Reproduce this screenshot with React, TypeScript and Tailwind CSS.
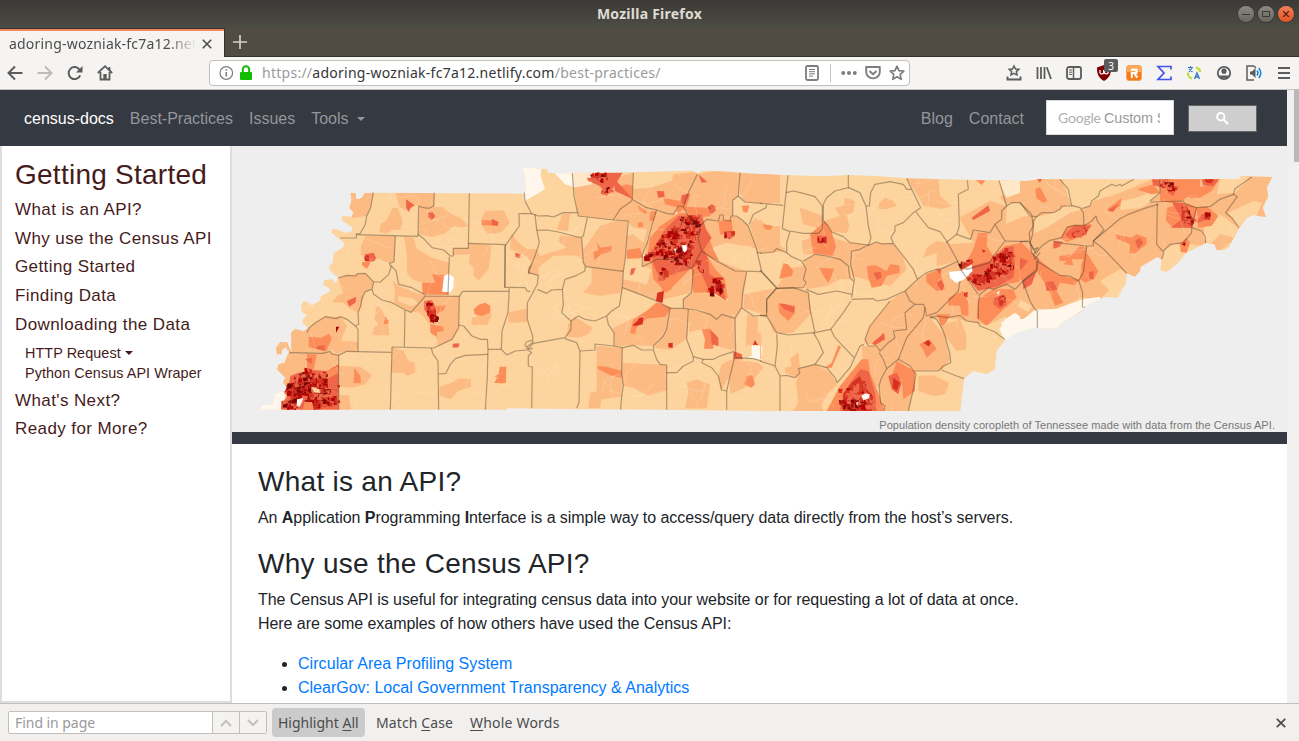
import React from "react";

type Patch = [string, string];

const C1 = "#fff7ec";
const C2 = "#fee8c8";
const C3 = "#fdd49e";
const C4 = "#fdbb84";
const C5 = "#fc8d59";
const C6 = "#ef6548";
const C7 = "#d7301f";
const C8 = "#b30000";
const C9 = "#7f0000";

const OUTLINE =
  "356,141 372,142 372,156 380,160 392,153 397,142 424,140 875,143 882,125 878,90 870,64 928,68 947,70 947,81 1020,81 1200,79 1380,74 1396,82 1410,75 1470,75 1524,80 1584,84 1680,88 1774,91 1849,87 1934,90 2024,97 2204,101 2384,105 2424,99 2704,100 3022,99 3026,91 3121,93 3104,125 3109,150 3092,185 3102,213 3079,210 3064,206 3044,215 3019,250 2989,305 2975,313 2954,312 2947,295 2924,290 2904,300 2864,320 2834,355 2804,378 2785,372 2789,340 2776,333 2726,362 2724,375 2709,392 2684,382 2682,410 2664,440 2657,455 2620,453 2604,460 2560,482 2540,503 2514,515 2490,530 2474,548 2404,545 2364,557 2319,583 2294,615 2289,670 2264,685 2224,675 2196,698 2185,795 1584,795 1300,791 1000,789 825,787 825,791 85,791 88,776 120,778 130,742 160,735 165,722 152,710 160,695 135,670 140,655 158,650 165,630 172,618 160,604 150,612 148,625 135,625 132,605 145,588 165,588 172,605 180,619 178,600 176,560 190,549 215,556 228,545 212,530 212,520 225,508 210,498 207,478 215,466 228,468 240,478 262,466 268,450 295,435 290,425 274,418 276,402 300,400 312,412 318,395 295,375 290,362 302,350 305,322 335,302 335,290 318,276 300,262 298,250 312,249 340,260 358,258 362,245 328,222 330,210 358,212 365,200 352,186 358,165";

const WEST: Patch[] = [
  [C4, "350,140 424,140 416,185 404,210 360,216 350,180"],
  [C4, "490,140 607,140 607,182 570,187 560,178 540,180 525,195 503,184"],
  [C4, "482,186 498,186 512,225 508,250 480,252 465,263 442,258 445,235 462,225"],
  [C6, "522,160 548,178 536,186 530,198 523,185"],
  [C4, "562,183 630,183 658,205 685,215 709,240 690,245 665,240 640,262 600,272 560,265"],
  [C6, "588,200 602,199 610,211 600,222 589,214"],
  [C4, "760,195 815,193 833,230 812,255 790,263 765,262 748,235 750,215"],
  [C5, "748,222 780,222 780,238 750,238"],
  [C6, "780,218 800,228 797,240 778,238"],
  [C4, "400,270 490,270 486,348 465,350 440,337 420,348 400,340 386,325 387,298"],
  [C6, "398,325 425,320 432,335 428,346 402,347"],
  [C7, "397,330 410,328 412,345 398,345"],
  [C5, "390,348 415,347 412,358 404,368 390,358"],
  [C4, "516,270 545,275 555,310 600,335 652,350 648,447 580,447 570,410 540,400 525,380 525,330"],
  [C5, "600,385 640,388 648,447 572,445 570,410 610,410"],
  [C4, "664,307 709,307 709,292 778,297 770,370 740,403 725,390 725,365 710,350 715,325 664,327"],
  [C4, "318,396 345,388 400,382 425,408 420,430 400,437 388,480 378,500 350,485 335,470 300,468 315,450 335,440 325,420"],
  [C6, "345,465 373,452 370,470 352,482"],
  [C4, "482,403 500,420 550,440 580,449 537,499 485,470 490,440"],
  [C3, "497,450 545,458 560,475 535,480 500,466"],
  [C4, "432,483 445,482 462,520 470,540 472,568 420,568 425,545 440,535 428,520"],
  [C5, "460,512 470,524 468,534 454,534"],
  [C4, "580,449 682,451 680,545 660,580 618,600 612,570 600,545 580,520 565,500 540,497"],
  [C6, "577,465 600,463 612,485 613,505 590,510 577,490"],
  [C5, "613,480 642,478 635,492 615,505"],
  [C5, "595,535 635,542 634,556 615,558 614,573 595,560"],
  [C7, "584,475 590,463 600,485 612,492 612,520 598,525 585,505"],
  [C9, "600,512 618,510 618,528 604,528"],
  [C4, "733,480 775,485 778,510 765,537 718,537 720,515 735,510"],
  [C5, "725,490 740,476 760,470 775,480 773,500 750,510 728,505"],
  [C4, "230,548 250,530 280,512 325,512 345,540 330,575 325,600 300,612 265,620 178,620 178,550 190,545"],
  [C4, "330,585 378,588 378,617 345,617 320,628 300,615"],
  [C5, "230,572 268,575 290,563 300,575 290,600 280,622 230,618"],
  [C6, "258,600 278,598 278,622 236,622"],
  [C8, "312,542 322,542 312,560"],
  [C4, "130,580 320,625 320,791 145,791 165,735 150,700 130,670"],
  [C1, "80,735 165,730 150,795 80,795"],
  [C5, "225,625 255,625 245,670 225,675"],
  [C6, "220,640 240,635 238,655"],
  [C6, "175,690 200,680 240,672 285,675 320,655 320,791 147,791 148,765 162,762"],
  [C5, "285,675 320,660 320,680 285,700"],
  [C4, "322,660 385,662 420,688 400,715 360,725 322,722"],
  [C5, "367,665 385,690 387,710 365,712"],
  [C4, "320,747 350,748 358,791 320,791"],
  [C4, "480,603 515,615 530,645 548,650 550,680 525,690 515,680 478,680"],
  [C6, "662,593 682,592 680,604 662,605"],
  [C4, "622,722 660,710 680,697 716,698 718,722 680,735 655,760 622,748"],
  [C5, "803,662 823,662 822,685 818,712 787,711 795,695 788,690 800,685"],
  [C4, "833,498 885,490 885,528 832,530"],
];

const MID: Patch[] = [
  [C1, "60,60 124,68 122,90 135,130 100,150 73,166 73,140 78,120"],
  [C1, "163,82 217,82 220,123 195,115 180,98"],
  [C2, "217,82 276,80 272,122 220,124"],
  [C4, "222,125 276,115 400,80 397,155 395,165 340,222 235,210"],
  [C4, "188,203 210,203 204,255 170,250"],
  [C4, "35,262 50,285 80,308 110,310 120,330 200,305 175,285 180,268 245,275 250,340 220,328 160,330 115,365 115,388 85,380 92,350 80,330 30,310"],
  [C6, "46,320 62,324 60,336 46,334"],
  [C4, "250,310 265,290 300,240 345,225 382,225 380,290 370,376 255,362 248,340"],
  [C5, "290,290 302,305 335,300 335,315 305,325 283,342 280,318 295,312"],
  [C4, "275,365 370,376 365,440 300,450 250,440 275,410"],
  [C4, "205,535 225,512 278,545 265,565 235,575 200,572"],
  [C4, "25,500 58,492 82,490 80,528 25,528"],
  [C4, "360,190 398,160 470,192 450,250 430,320 420,340 380,340 382,270 400,265 430,290 440,250 400,245 382,225 345,222"],
  [C5, "412,178 440,195 438,205 420,195"],
  [C5, "414,230 428,228 430,242 414,244"],
  [C5, "380,312 420,306 428,335 380,338"],
  [C5, "450,198 470,195 465,225 448,224"],
  [C4, "400,130 450,125 515,105 520,85 590,78 592,85 550,182 520,205 470,192 397,155"],
  [C6, "470,135 492,136 494,152 475,155"],
  [C5, "490,155 540,165 535,185 495,175"],
  [C5, "345,125 380,115 398,120 395,158"],
  [C6, "340,95 400,160 345,135"],
  [C6, "275,80 368,80 340,125 320,148 300,120 276,110"],
  [C4, "592,85 640,75 720,80 715,150 698,163 698,210 650,212 610,235 560,240 540,210 550,182"],
  [C4, "720,80 840,87 840,172 735,168 720,140"],
  [C6, "595,85 622,108 605,110"],
  [C5, "545,150 572,145 560,182 620,185 650,180 630,210 600,215 545,225 530,195"],
  [C6, "545,148 570,142 555,175 545,172"],
  [C5, "725,180 748,178 742,200 730,198"],
  [C4, "610,235 650,212 710,210 745,240 770,310 745,300 720,298 680,290 650,300 620,310"],
  [C5, "655,225 695,222 700,270 660,265"],
  [C7, "672,257 705,255 705,268 675,278"],
  [C4, "750,235 765,215 800,240 840,240 840,318 770,318"],
  [C5, "790,235 816,240 815,250 790,245"],
  [C4, "470,195 530,205 550,190 610,235 620,310 600,350 575,440 470,465 367,425 370,400 440,415 455,370 427,360 440,290"],
  [C5, "450,275 480,240 540,200 600,205 625,270 640,310 660,350 680,400 700,465 640,440 580,440 575,365 500,440 460,400 455,355 440,340"],
  [C4, "620,330 740,377 725,485 705,517 650,515 600,490 550,487 550,460 580,440 640,445 685,468 675,400 650,375"],
  [C6, "455,325 470,290 495,250 535,210 605,205 618,250 635,275 612,310 625,340 570,370 530,380 500,410 480,400 460,355"],
  [C6, "590,350 625,345 628,385 655,400 680,465 625,430"],
  [C5, "472,398 520,385 515,430 490,440"],
  [C7, "472,440 492,435 488,470 468,465"],
  [C6, "393,368 407,365 400,385 390,388"],
  [C4, "340,545 410,512 440,495 470,465 510,487 500,550 460,600 400,598 345,600"],
  [C5, "440,495 470,470 515,485 495,512 440,518 410,545 405,565 390,560 400,520"],
  [C7, "397,538 412,525 418,515 430,515 428,535 405,540"],
  [C4, "510,487 565,490 560,580 510,612 465,605 500,550"],
  [C7, "505,592 518,590 518,606 505,604"],
  [C4, "565,490 705,517 705,615 650,600 630,565 605,550 567,558"],
  [C5, "605,550 632,548 640,570 640,608 612,608 615,580"],
  [C6, "632,552 655,575 655,600 635,595"],
  [C4, "367,650 500,657 500,735 445,750 400,725 367,720"],
  [C4, "290,600 367,605 365,752 305,760 300,787 265,787 270,740 290,735"],
  [C5, "292,660 320,662 365,675 365,695 330,688 295,670"],
  [C4, "560,710 590,700 630,715 620,787 555,787 565,740"],
  [C4, "665,655 695,640 775,650 790,665 745,720 690,745 688,690 663,735 655,690"],
  [C5, "740,690 757,688 765,715 755,725 732,715"],
  [C4, "740,505 775,515 772,555 785,570 785,598 735,600 740,545"],
  [C7, "765,583 774,597 759,597"],
  [C1, "755,598 787,600 786,642 740,634 755,630"],
  [C6, "700,615 725,625 728,640 700,640"],
  [C4, "733,445 840,425 840,560 820,560 800,508 730,485"],
  [C5, "0,665 18,662 18,710 0,712"],
];

const EASTMID: Patch[] = [
  [C4, "0,82 38,87 32,175 0,172"],
  [C4, "0,220 45,260 60,300 80,312 20,318 0,320"],
  [C5, "8,235 38,240 30,252 15,250"],
  [C4, "118,185 150,195 187,210 190,225 260,205 268,240 260,262 215,258 187,250 130,235"],
  [C4, "255,155 285,165 280,200 240,212 225,185 250,180"],
  [C4, "375,155 400,165 410,180 380,190 355,188 357,172"],
  [C4, "125,285 180,265 270,290 325,297 275,312 272,370 230,335 165,325 130,325"],
  [C5, "150,265 195,225 215,258 228,300 220,330 160,322"],
  [C7, "172,270 200,272 200,292 172,292"],
  [C4, "275,312 345,290 400,292 430,335 440,370 415,395 390,420 275,390 272,340"],
  [C5, "320,360 348,358 380,375 390,355 418,358 420,380 380,390 365,420 335,425 325,395"],
  [C6, "340,380 362,377 365,395 350,402"],
  [C4, "60,372 130,360 138,395 130,425 50,427 65,400"],
  [C5, "70,352 84,355 100,375 95,390 58,398"],
  [C4, "130,345 165,325 240,340 270,370 275,400 240,400 200,420 138,430"],
  [C5, "178,365 222,368 215,390 205,410 190,390"],
  [C4, "0,435 50,427 100,425 145,440 155,500 100,560 60,565 25,515 0,510"],
  [C5, "55,475 105,478 105,500 85,525 58,500"],
  [C6, "57,472 78,475 105,485 100,500 72,490"],
  [C4, "0,540 5,640 0,640"],
  [C4, "90,640 115,618 118,650 120,665 115,695 75,680 75,665 95,660"],
  [C5, "235,598 243,602 215,665 195,665 215,650"],
  [C4, "120,665 165,655 210,680 232,715 205,740 185,775 190,795 100,795 115,770 108,710"],
  [C4, "440,97 535,100 540,150 575,180 545,188 490,180 480,160"],
  [C4, "718,150 740,180 700,230 735,285 810,287 815,205 840,212 840,100 790,140"],
  [C2, "717,103 822,105 795,135 740,155"],
  [C3, "720,205 745,172 780,170 815,205 770,220 725,240"],
  [C4, "500,305 530,285 560,290 598,345 530,360 530,320 490,335"],
  [C4, "598,215 690,165 740,180 735,285 840,290 840,490 790,520 680,540 650,530 590,520 510,515 440,600 380,668 350,600 312,590 330,540 390,465 435,435 472,400 595,345 560,295 640,290"],
  [C6, "635,215 685,178 690,195 640,222"],
  [C5, "648,103 676,103 665,117"],
  [C5, "498,385 540,370 545,395 555,430 530,435 500,410"],
  [C6, "528,370 545,370 540,385"],
  [C6, "528,410 545,402 553,420 545,435"],
  [C4, "360,600 440,560 495,485 510,515 555,570 570,640 545,672 465,675 415,640 380,668"],
  [C5, "478,595 510,580 530,608 500,635 490,612"],
  [C7, "490,590 505,582 513,592 505,602"],
  [C6, "336,592 372,560 375,580 345,598"],
  [C5, "530,505 570,505 560,528 545,545"],
  [C4, "540,540 600,520 620,570 618,610 590,615 555,570"],
  [C4, "475,690 520,688 568,710 555,745 520,750 475,735"],
  [C4, "305,600 350,600 380,668 357,720 330,735 325,650 308,640"],
  [C5, "200,795 240,720 305,640 325,640 330,680 355,740 375,795"],
  [C6, "240,795 250,740 300,670 325,675 345,740 350,795"],
  [C7, "250,795 250,745 275,710 300,690 310,720 335,745 335,795"],
  [C7, "234,728 248,728 246,742 236,740"],
  [C4, "380,668 415,640 465,680 460,730 445,795 372,795 357,720"],
  [C5, "410,645 465,675 465,735 430,760 425,700 390,705"],
  [C6, "385,690 410,680 425,710 415,745 395,730"],
  [C7, "400,695 420,710 410,735 398,725"],
  [C5, "640,310 655,260 683,262 680,300 700,330 735,300 785,290 780,330 830,340 832,380 790,405 740,415 700,430 640,410 600,380"],
  [C5, "565,455 610,435 625,470 625,510 605,508 600,480 565,478"],
  [C5, "655,460 700,430 760,430 770,455 720,500 680,540 650,515"],
  [C6, "635,360 690,345 735,305 760,300 765,360 760,395 715,420 655,435 625,400"],
  [C7, "600,360 635,338 640,350 605,370"],
  [C7, "612,440 623,438 622,455 612,450"],
  [C7, "665,310 678,315 670,320"],
  [C6, "702,455 735,445 740,475 720,490 700,475"],
  [C7, "715,460 730,452 735,468 720,478"],
  [C1, "568,378 605,375 635,357 637,375 612,400 588,410 570,395"],
  [C3, "780,460 812,440 840,490 800,510 775,480"],
  [C3, "675,540 740,510 720,550"],
  [C1, "718,550 735,520 765,500 790,518 840,490 840,570 735,585"],
  [C5, "790,405 840,360 840,425 800,430"],
  [C6, "790,405 825,380 840,390 800,430"],
];

const EAST: Patch[] = [
  [C4, "0,105 55,99 125,100 155,180 190,190 220,165 300,140 400,98 620,98 700,88 760,92 740,215 590,320 545,300 490,290 425,345 360,400 320,385 240,458 185,455 110,490 45,490 0,525"],
  [C3, "125,100 342,100 275,115 230,155 210,180 155,180 145,130"],
  [C3, "0,170 30,210 0,212"],
  [C3, "45,215 100,200 145,178 190,190 150,200 80,245 42,262"],
  [C3, "305,165 360,152 395,135 418,145 390,168 365,185 300,192"],
  [C3, "600,100 662,91 690,95 645,140 590,145"],
  [C3, "625,200 700,165 725,170 710,208 655,245"],
  [C3, "555,230 600,205 655,245 645,275 600,265 570,295 550,280"],
  [C3, "425,345 430,315 465,292 490,305 490,330 470,360 440,378 418,375"],
  [C3, "240,405 300,370 320,382 318,430 293,455 275,440"],
  [C3, "0,460 35,480 25,498 0,485"],
  [C1, "-60,530 -15,516 12,520 45,492 110,488 190,460 240,452 240,462 195,485 110,550 0,560"],
  [C5, "45,130 60,122 82,165 70,170 50,158"],
  [C6, "50,99 66,99 60,110"],
  [C5, "262,190 305,155 300,180 270,198"],
  [C6, "262,193 295,175 280,197"],
  [C5, "350,130 400,115 420,140 395,145"],
  [C6, "395,100 455,100 470,150 445,145 430,125 400,118"],
  [C5, "420,100 540,100 540,130 500,155 485,165 450,170 420,165"],
  [C5, "520,130 560,118 595,105 575,135 540,155 505,155"],
  [C6, "440,100 470,125 460,150 445,140"],
  [C6, "545,100 598,100 580,120 550,118"],
  [C7, "552,100 582,100 575,112 560,110"],
  [C5, "440,185 500,170 530,185 525,215 515,245 460,245 438,225"],
  [C6, "455,168 490,170 500,200 525,225 515,245 452,245 485,220"],
  [C7, "485,185 500,180 522,225 515,240 485,222"],
  [C5, "530,185 560,180 595,210 575,240 535,245"],
  [C6, "545,205 572,200 570,220 530,230"],
  [C5, "288,265 335,275 350,265 380,275 380,295 345,322 328,322 330,295 290,278"],
  [C6, "345,285 360,275 370,292 355,308"],
  [C5, "480,292 500,275 510,290 500,320 482,318"],
  [C8, "485,295 497,288 495,300"],
  [C5, "120,275 145,240 190,235 215,235 190,270 140,288"],
  [C6, "135,265 165,237 192,240 215,238 195,265 150,280"],
  [C7, "155,262 188,248 192,268 160,275"],
  [C6, "100,285 128,287 120,302 100,308"],
  [C5, "118,330 155,325 180,300 200,305 195,340 155,340 160,358 130,355 140,345 118,345"],
  [C5, "185,350 200,320 235,375 222,400 195,410 180,400"],
  [C6, "207,378 222,375 220,400 208,398"],
  [C5, "0,285 45,330 110,385 175,400 165,418 120,410 110,435 130,470 105,480 90,440 75,415 50,375 8,405 0,400"],
  [C6, "0,335 25,345 0,375"],
  [C6, "8,405 50,375 35,415 10,430"],
  [C6, "75,410 100,405 112,432 80,435"],
];

const WEST_LINES = [
  "424,140 416,185 404,210 400,235 385,262 373,264 373,276 325,276",
  "373,266 558,271", "490,270 486,348 472,352 478,362",
  "318,396 345,388 372,390 376,383 400,382 425,408 420,430 400,437 390,455 386,480 378,500 380,535 370,540 345,520 325,512 312,518 280,512 250,530 232,545 225,560",
  "425,408 445,408 470,385 478,360 492,374 500,415 540,425 580,447",
  "420,430 425,445 450,462 480,470 520,492 537,499 580,450 682,451",
  "558,271 560,180 570,184 590,187 605,180 607,140",
  "558,265 575,278 600,305 635,312 655,330 664,330 664,307 709,307 712,142",
  "652,332 648,447", "709,292 820,296 818,424 880,425 885,435 895,437",
  "682,451 692,436 830,436 832,428 828,500 810,555 808,610",
  "682,451 680,545 660,580 605,606 480,603",
  "680,537 695,540 720,570 745,580 766,580 768,610 808,610 825,627 850,615 885,612",
  "519,492 517,603", "370,540 378,550 378,617",
  "172,620 270,622 295,616 300,624 320,628 345,616 478,619",
  "320,628 320,791", "480,603 475,791", "598,606 602,622 618,645 620,791",
  "620,684 642,682 655,655 670,638 700,628 768,625", "768,610 766,690 760,791",
];
const MID_LINES = [
  "73,140 75,165 95,203 57,203 58,240 42,262 15,300 15,424",
  "95,203 115,210 140,209 160,213 190,200 232,200",
  "217,82 222,150 235,210 340,222 385,225 382,260 375,345 370,375 367,425 358,480 335,495 320,510 325,535 342,560 342,600",
  "105,205 110,250 118,290 105,330 95,355 85,380 115,388 112,415 100,437 82,470 82,520 98,570 98,590 80,602",
  "110,253 140,252 175,258 240,275 250,270 262,215", "245,275 250,350 257,362 370,376",
  "255,362 255,375 230,388 195,400 187,430 155,432 140,442 112,430",
  "187,430 190,475 185,500 213,525 235,510 255,520 285,525 320,510",
  "213,525 213,550 195,575 145,584 100,592 82,610 95,620 85,630 85,660 97,663 95,787",
  "195,578 230,590 240,615 285,612 285,594 342,600 367,605 400,598 425,612 460,612 470,640 480,655 500,657 500,791",
  "240,615 237,770 230,787", "367,605 365,680 370,720 364,760 362,791",
  "400,80 397,155 395,165 360,190 340,222", "397,160 440,185 470,192 500,202 520,205 535,180 550,182 565,140 592,85",
  "470,192 455,240 442,290 427,325 427,362 470,340 520,340 540,348 575,368 590,340 605,315 595,280 600,240 570,220 550,182",
  "367,425 420,445 470,465 510,487 550,487 550,460 575,440 580,370",
  "510,487 500,550 490,570 460,600 462,610", "550,487 590,492 630,505 650,520 665,505 705,517 725,485 728,440 740,377",
  "565,490 560,580 580,632", "500,680 530,680 550,660 580,645 580,632 610,640 640,640 660,630 700,617",
  "705,517 707,620 700,650 690,690 680,735 665,732 655,690 635,665 605,650 610,640", "680,735 680,791",
  "605,315 650,345 705,375 785,377 830,425",
  "600,240 620,220 655,225 660,207 670,207 670,222 690,225 693,210 710,210 730,225 745,240 770,310 785,377",
  "720,80 715,150 698,163 698,210", "715,150 735,168 784,172", "800,175 798,185 760,205 748,235",
  "770,320 784,321", "830,425 800,460 800,500", "725,485 760,510 800,508",
  "707,635 760,638 784,645",
];
const EASTMID_LINES = [
  "84,88 76,160 67,248 90,257 80,290 80,320 50,308 40,318 0,322", "0,172 70,178",
  "78,140 100,135 130,142 165,152 187,180 187,250 175,262 130,262 90,255",
  "265,87 265,125 225,135 200,155 190,175 190,225 205,240 215,258 250,272 270,290 325,297",
  "265,125 300,140 318,180 325,240 333,275 325,298", "318,180 328,180 332,140 345,115 390,107 430,115 440,130 455,130 440,97",
  "455,130 482,185 460,200 430,230 405,240 405,255 393,275 400,290",
  "468,198 505,245 540,257 560,285 590,340 605,375 655,445",
  "325,297 300,310 275,315 272,355 283,400 275,455",
  "325,298 350,288 365,294 400,292 430,330 460,370 472,400 435,435 380,460 350,465 340,458 275,460",
  "472,400 500,380 530,370 545,368 595,345", "80,320 95,332 125,345 138,370 130,400 138,410 130,425 50,427",
  "130,345 165,325 200,330 240,340 265,360 270,395 280,405", "138,430 175,445 230,435 275,445",
  "0,372 50,427 20,460 20,510 50,560 85,567 165,560",
  "50,427 100,425 145,440 150,490 165,560 212,550 250,500 273,465",
  "50,565 52,600 45,660 60,690 60,795", "0,645 45,660", "20,510 0,508",
  "60,690 80,688 105,695 120,680 115,668 165,655 200,665 225,695 232,710 270,665 300,600 312,595",
  "160,560 175,585 190,620 165,655", "212,550 225,575 282,635",
  "435,435 450,465 465,475 435,500 440,550 400,555 405,575 385,590 360,615 350,600 325,600 315,580 330,540 390,465",
  "465,475 490,475 495,485 490,515 440,575 415,640 380,668 370,640 357,620",
  "380,668 365,695 357,720 362,770 375,780 372,795", "415,640 450,660 468,685 460,730 445,795",
  "465,675 535,675 550,660 572,650 570,625 555,570 545,545 530,520 510,512",
  "545,672 590,690 612,698", "495,485 500,510 530,500 560,470 595,435 600,405",
  "510,515 530,510 560,515 600,508 620,525 655,530 660,540 705,558 720,570 735,580",
  "600,350 620,370 690,350 700,330 735,285 705,235 690,260 640,252 632,280 590,265 558,290",
  "622,103 625,130 595,145 598,240 590,265", "717,103 740,180 755,170 780,170 800,190 815,205",
  "740,180 725,195 725,220 705,235",
  "735,285 810,287 808,260 820,240 815,205",
  "810,287 815,320 835,340 830,375 790,405 765,430 740,415 700,430 685,425 660,445 655,470 655,520",
];
const EAST_LINES = [
  "120,100 145,130 155,180 125,180 120,190 100,200 65,200 50,212 40,225 38,265 30,290 50,325",
  "0,170 30,210 50,212", "155,178 180,185 190,200 192,240 165,237 140,245 125,275 90,283 65,300 50,320",
  "185,188 210,180 215,165 235,150 240,135 275,115 290,120 300,115 305,120 342,100",
  "192,240 215,225 228,210 232,225 252,252 220,285 220,300 200,300 130,292 100,285",
  "220,285 300,218 325,205 380,185 415,175", "220,285 250,308 290,350 320,382",
  "200,300 190,380 175,405 150,390 120,388 50,345 50,370 8,405 30,465 45,490 52,495 52,545",
  "175,400 188,440 187,483 195,483",
  "412,172 410,295 432,320 425,340", "430,315 450,295 490,290 515,260 515,245 530,185 495,175 490,165 390,168",
  "390,165 420,140 420,100", "530,185 570,182 600,160 640,145 645,128 695,93", "640,145 652,152 617,200 635,215 657,245",
  "515,245 545,255 555,270 557,290", "0,287 25,285", "30,290 40,310 55,305 40,325 45,340 60,320",
];

function makeRandom(seed: number) {
  let s = seed;
  return () => {
    s = (s * 16807) % 2147483647;
    return s / 2147483647;
  };
}

/* Dense urban tracts: [centre x, centre y, radius x, radius y, tilt, count, darkest share] */
const CITIES: [number, number, number, number, number, number, number][] = [
  [222, 728, 54, 50, 0.2, 260, 0.62],
  [270, 735, 46, 20, -0.3, 60, 0.4],
  [282, 764, 40, 16, 0.2, 50, 0.4],
  [248, 776, 22, 12, 0, 30, 0.7],
  [178, 775, 24, 16, 0, 40, 0.4],
  [262, 700, 28, 18, 0, 40, 0.45],
  [594, 490, 9, 24, -0.3, 12, 0.3],
  [606, 516, 12, 12, 0, 12, 0.6],
  [1322, 275, 72, 24, -0.85, 150, 0.5],
  [1380, 250, 20, 42, 0.1, 90, 0.4],
  [1386, 222, 26, 10, 0, 18, 0.5],
  [1352, 320, 34, 28, 0, 80, 0.5],
  [1340, 345, 40, 12, 0.3, 26, 0.45],
  [1264, 325, 26, 8, -0.5, 16, 0.4],
  [1295, 385, 13, 16, 0, 16, 0.45],
  [1406, 362, 8, 26, -0.5, 18, 0.45],
  [1461, 417, 12, 24, -0.2, 28, 0.55],
  [1436, 434, 11, 10, 0, 9, 0.55],
  [1100, 97, 28, 17, 0, 38, 0.4],
  [1126, 136, 18, 8, -0.3, 12, 0.25],
  [1440, 188, 12, 8, -0.6, 7, 0.2],
  [1490, 266, 14, 7, 0, 6, 0.3],
  [2250, 396, 38, 16, -0.3, 55, 0.55],
  [2294, 370, 66, 22, -0.6, 120, 0.5],
  [2318, 345, 28, 36, 0.3, 70, 0.4],
  [2200, 352, 22, 4, -0.5, 9, 0.3],
  [2308, 464, 8, 16, 0, 8, 0.2],
  [1872, 740, 46, 22, -0.7, 50, 0.2],
  [1868, 778, 44, 18, 0, 85, 0.6],
  [1905, 765, 18, 20, 0, 28, 0.4],
  [1768, 280, 9, 10, 0, 7, 0.5],
  [2802, 112, 18, 11, 0, 14, 0.4],
  [2822, 128, 15, 6, 0, 8, 0.3],
  [2862, 204, 10, 24, -0.2, 16, 0.35],
  [2874, 222, 18, 8, 0.1, 12, 0.4],
  [2928, 210, 12, 7, 0, 6, 0.25],
  [2545, 262, 22, 8, -0.4, 9, 0],
];

function CityTracts() {
  const rnd = makeRandom(4217);
  const tracts: React.ReactNode[] = [];
  CITIES.forEach(([cx, cy, rx, ry, tilt, count, dark], ci) => {
    for (let i = 0; i < count; i++) {
      const a = rnd() * Math.PI * 2;
      const r = Math.sqrt(rnd()) * (0.9 + 0.2 * Math.sin(3 * a + ci) + 0.12 * Math.sin(7 * a));
      const ex = Math.cos(a) * r * rx;
      const ey = Math.sin(a) * r * ry;
      const x = cx + ex * Math.cos(tilt) - ey * Math.sin(tilt);
      const y = cy + ex * Math.sin(tilt) + ey * Math.cos(tilt);
      const w = 2.5 + rnd() * 5.5;
      const h = 2.5 + rnd() * 5.5;
      const t = rnd();
      const fill = t < dark * 0.35 ? C9 : t < dark ? C8 : t < dark + 0.32 ? C7 : C6;
      const j = () => (rnd() - 0.5) * 6;
      const points = `${x - w + j()},${y - h + j()} ${x + w + j()},${y - h + j()} ${x + w + j()},${y + h + j()} ${x - w + j()},${y + h + j()}`;
      tracts.push(<polygon key={`${ci}-${i}`} points={points} fill={fill} stroke="#f5b79a" strokeOpacity="0.22" strokeWidth="1.2" />);
    }
  });
  return <g>{tracts}</g>;
}

function TractLines() {
  const rnd = makeRandom(991);
  const lines: string[] = [];
  for (let i = 0; i < 260; i++) {
    let x = 150 + rnd() * 2900;
    let y = 90 + rnd() * 700;
    let a = rnd() * Math.PI * 2;
    const pts = [`${x.toFixed(0)},${y.toFixed(0)}`];
    for (let k = 0; k < 8; k++) {
      a += (rnd() - 0.5) * 1.5;
      x += Math.cos(a) * 11;
      y += Math.sin(a) * 11;
      pts.push(`${x.toFixed(0)},${y.toFixed(0)}`);
    }
    lines.push(pts.join(" "));
  }
  return (
    <g fill="none" stroke="#fff0da" strokeOpacity="0.35" strokeWidth="2">
      {lines.map((p, i) => <polyline key={i} points={p} />)}
    </g>
  );
}

const SECTIONS: [number, Patch[], string[]][] = [
  [0, WEST, WEST_LINES],
  [804, MID, MID_LINES],
  [1584, EASTMID, EASTMID_LINES],
  [2364, EAST, EAST_LINES],
];

function TennesseeMap() {
  return (
    <svg className="block h-[286px] w-[1055px]" viewBox="0 0 3165 858">
      <clipPath id="state"><polygon points={OUTLINE} /></clipPath>
      <g clipPath="url(#state)">
        <rect width="3165" height="858" fill={C3} />
        {SECTIONS.map(([x, patches]) => (
          <g key={x} transform={`translate(${x} 0)`}>
            {patches.map(([fill, p], i) => <polygon key={i} points={p} fill={fill} />)}
          </g>
        ))}
        <TractLines />
        <CityTracts />
        <polygon points="238,722 262,730 264,741 246,738" fill={C3} />
        <polygon points="195,760 214,756 210,768 203,782 194,780" fill={C1} />
        <polygon points="218,768 240,768 246,791 212,791" fill={C5} />
        <polygon points="636,390 650,383 666,395 664,425 655,439 630,437" fill="#fff" />
        <polygon points="1350,298 1364,297 1365,312 1358,320 1352,312" fill="#fff" />
        <polygon points="1326,310 1332,308 1330,322" fill="#fff" />
        <polygon points="2152,378 2189,375 2219,357 2221,375 2196,400 2172,410 2154,395" fill="#fff" />
        <polygon points="1888,750 1900,742 1913,745 1912,757 1894,763" fill={C1} />
        <polygon points="1872,770 1878,767 1876,782" fill={C1} />
        <polygon points="2293,440 2304,434 2300,447" fill={C1} />
      </g>
      <g fill="none" stroke="#4a3c28" strokeOpacity="0.42" strokeWidth="3.6" strokeLinejoin="round">
        {SECTIONS.map(([x, , lines]) => (
          <g key={x} transform={`translate(${x} 0)`}>
            {lines.map((p, i) => <polyline key={i} points={p} />)}
          </g>
        ))}
        <path d="M897 358q-12 12-5 26M900 583q-25 4-20 17q8 12 22 7" />
      </g>
    </svg>
  );
}

const UI = "font-['Noto_Sans',sans-serif]";

function Icon({ children, className = "" }: { children: React.ReactNode; className?: string }) {
  return (
    <svg className={`block size-4 shrink-0 overflow-visible ${className}`} viewBox="0 0 16 16" fill="none" stroke="currentColor" strokeWidth="2">
      {children}
    </svg>
  );
}

const Star = "M8 1.2l2 4.4 4.8.5-3.6 3.3 1 4.9L8 11.8l-4.2 2.5 1-4.9L1.2 6.1 6 5.6z";

function TitleBar() {
  return (
    <div className="grid h-7 grid-cols-[1fr_auto_1fr] items-center bg-linear-to-b from-[#3b3a36] to-[#4c4b44] pr-[5px] pl-[5px]">
      <span />
      <span className="font-['Noto_Sans',sans-serif] text-[14px] leading-7 font-bold tracking-[0.25px] text-[#dfdbd2]">Mozilla Firefox</span>
      <div className="flex justify-end gap-1">
        <div className="grid size-4 place-items-center rounded-full bg-linear-to-b from-[#8b8980] to-[#67665f] text-[#3a3935] ring-1 ring-[#3a3935]">
          <svg className="size-2.5" viewBox="0 0 10 10" stroke="currentColor"><path d="M1 5.5h8" /></svg>
        </div>
        <div className="grid size-4 place-items-center rounded-full bg-linear-to-b from-[#8b8980] to-[#67665f] text-[#3a3935] ring-1 ring-[#3a3935]">
          <svg className="size-2.5" viewBox="0 0 10 10" fill="none" stroke="currentColor"><path d="M1.5 2.5h7v5h-7z" /></svg>
        </div>
        <div className="grid size-4 place-items-center rounded-full bg-linear-to-b from-[#f37e5b] to-[#e3521f] text-[#4b1a0a] ring-1 ring-[#3a3935]">
          <svg className="size-2.5" viewBox="0 0 10 10" stroke="currentColor" strokeWidth="1.2"><path d="M2.2 2.2l5.6 5.6M7.8 2.2L2.2 7.8" /></svg>
        </div>
      </div>
    </div>
  );
}

function TabStrip() {
  return (
    <div className="flex h-[29px] bg-[#504c44]">
      <div className="flex w-[225px] items-center border-t border-r border-[#33322e] bg-[#f5f4f2]">
        <div className="flex h-full w-full items-center border-t-2 border-[#f1875c] pl-[9px]">
          <div className="w-[187px] overflow-hidden mask-r-from-85% mask-r-to-100%">
            <span className={`${UI} block text-[14px] leading-[22px] tracking-[0.2px] whitespace-nowrap text-[#4c4c4c]`}>adoring-wozniak-fc7a12.netlify.com</span>
          </div>
          <svg className="ml-[6px] size-[10px] text-[#4c4c4c]" viewBox="0 0 10 10" stroke="currentColor" strokeWidth="1.6"><path d="M.8.8l8.4 8.4M9.2.8L.8 9.2" /></svg>
        </div>
      </div>
      <div className="flex flex-1 items-center border-b border-[#33322e] pl-2">
        <svg className="size-[14px] text-[#d5d0c5]" viewBox="0 0 14 14" stroke="currentColor" strokeWidth="1.7"><path d="M7 0v14M0 7h14" /></svg>
      </div>
    </div>
  );
}

function ToolBar() {
  return (
    <div className="flex h-[33px] items-center border-b border-[#c6c2bd] bg-[#f5f4f2] text-[#5c5c5c]">
      <div className="flex w-[209px] items-center gap-[14px] pl-[7px]">
        <Icon><path d="M15.5 8H1.5M8 1.5L1.5 8 8 14.5" /></Icon>
        <Icon className="text-[#bcbbb9]"><path d="M.5 8h14M8 1.5L14.5 8 8 14.5" /></Icon>
        <Icon><path d="M13.2 10.3a6 6 0 1 1-.6-5.600" /><path d="M15.500 1v6.500H9z" fill="currentColor" stroke="none" /></Icon>
        <Icon><path d="M.8 8L8 1.2 15.2 8M3.5 7v7.5h9V7M12.5 5V2" strokeWidth="1.8" /><path d="M6.3 14V9h3.4v5z" fill="currentColor" stroke="none" /></Icon>
      </div>
      <div className="flex h-[26px] w-[701px] items-center rounded-[4px] border border-[#c3bfba] bg-white pl-[9px] text-[#7d7d7d]">
        <Icon className="mr-[5px]"><circle cx="7.3" cy="8" r="6.3" strokeWidth="1.2" /><path d="M7.3 7v4.5M7.3 4.2v1.6" strokeWidth="1.6" /></Icon>
        <svg className="h-4 w-3" viewBox="0 0 12 16" fill="none"><rect y="7" width="12" height="8" rx="1" fill="#12bc00" /><path d="M2.8 8V4.5a3.2 3.2 0 0 1 6.4 0V8" stroke="#12bc00" strokeWidth="2" /></svg>
        <div className={`${UI} ml-[10px] text-[14px] leading-6 tracking-[0.26px] whitespace-nowrap text-[#9b9b9b]`}>
          https://<span className="text-[#363636]">adoring-wozniak-fc7a12.netlify.com</span>/best-practices/
        </div>
        <div className="ml-auto flex items-center pr-1">
          <Icon><rect x="2" y="1" width="12" height="14" rx="1.5" strokeWidth="1.8" /><path d="M5 4.5h6M5 6.7h6M5 8.9h6M5 11.1h4" strokeWidth="1" /></Icon>
          <span className="mx-[10px] h-[18px] w-px bg-[#c3c3c3]" />
          <Icon><g fill="currentColor" stroke="none"><circle cx="2.2" cy="8" r="2" /><circle cx="8" cy="8" r="2" /><circle cx="13.8" cy="8" r="2" /></g></Icon>
          <Icon className="ml-2"><path d="M1.2 2h13.6v5a6.8 6.4 0 0 1-13.6 0zM4.5 6L8 9.3 11.5 6" strokeWidth="1.9" strokeLinejoin="round" /></Icon>
          <Icon className="ml-2"><path d={Star} strokeWidth="1.7" strokeLinejoin="round" /></Icon>
        </div>
      </div>
      <div className="ml-auto flex items-center gap-[14px] pr-[7px]">
        <Icon><path d="M8 1l1.5 3 3.3.4-2.4 2.2.6 3.3-3-1.6-3 1.6.6-3.3-2.4-2.2L6.5 4z" strokeWidth="1.5" /><path d="M1.5 11.5v3h13v-3" strokeWidth="1.9" /></Icon>
        <Icon><path d="M1.5 2v12M5 2v12M8.5 2v12M10.800 2.200L15 14" strokeWidth="1.8" /></Icon>
        <Icon><rect x="1" y="2" width="14" height="12" rx="2" strokeWidth="1.8" /><path d="M7.5 2v12" strokeWidth="1.5" /><path d="M3 5h3M3 7.2h3M3 9.4h3" strokeWidth="1" /></Icon>
        <div className="relative">
          <Icon><path d="M8 0l7 2.5c0 6-1 10-7 13.5C2 12.500 1 8.500 1 2.500z" fill="#800000" stroke="none" /><path d="M4 5v3.200q1.800 1.800 3.600 0V5" stroke="#fff" strokeWidth="1.200" /><circle cx="10.300" cy="7" r="1.900" stroke="#fff" strokeWidth="1.200" /></Icon>
          <span className={`${UI} absolute -top-[6px] left-2 grid h-[13px] w-[14px] place-items-center rounded-[2px] bg-[#5b5b5b] text-[10px] leading-none text-white`}>3</span>
        </div>
        <Icon><rect x=".5" y=".5" width="15" height="15" rx="2.500" fill="#f47c1b" stroke="#f6a15c" strokeWidth="1" /><path d="M1 1h14v6H1z" fill="#fbaa5b" stroke="none" /><path d="M5 4.800h5.500v3.200H5.800v5M8.500 9l3 3.500" stroke="#fff" strokeWidth="2" /></Icon>
        <Icon className="text-[#4152ee]"><path d="M15 4.500V1.500H2L8 8l-6 6.500h13v-3" strokeWidth="1.700" /></Icon>
        <Icon><path d="M10 2.500a5.500 5.500 0 0 1 4.300 4.500M2 7.500a5.500 5.500 0 0 0 4 6" stroke="#b9df23" strokeWidth="2" /><path d="M2 2.500h5M4.500 1v1.500M3 7l3-4M3 4l3.500 3" stroke="#3577bd" strokeWidth="1.100" /><path d="M8.500 14l2.500-6 2.500 6M9.500 12h3.200" stroke="#3577bd" strokeWidth="1.400" /></Icon>
        <Icon><circle cx="8" cy="8" r="6.200" strokeWidth="1.800" /><path d="M8 3.500a2.600 2.600 0 0 1 2.600 2.800c0 1.500-1 2.700-2.600 2.700S5.400 7.800 5.400 6.300A2.600 2.600 0 0 1 8 3.500z" fill="currentColor" stroke="none" /><path d="M3 10.500h10L11 13.500H5z" fill="currentColor" stroke="none" /></Icon>
        <Icon><path d="M8 1H1v14h7M8 1l2 2" strokeWidth="1.500" /><path d="M4 6.500h2L9.500 3v10L6 9.500H4z" fill="currentColor" stroke="none" /><path d="M11 5.500q2 2.500 0 5M12.800 3q4 5 0 10" stroke="#1584df" strokeWidth="1.500" /></Icon>
        <Icon><path d="M2 3h12M2 8h12M2 13h12" strokeWidth="2" /></Icon>
      </div>
    </div>
  );
}

function NavBar() {
  return (
    <nav className="flex h-14 shrink-0 items-center bg-[#353941] pl-6 text-base text-[#949699]">
      <div className="flex items-center gap-4 pt-px">
        <span className="text-white">census-docs</span>
        <span>Best-Practices</span>
        <span>Issues</span>
        <span className="flex items-center gap-2">Tools<i className="border-x-4 border-t-4 border-x-transparent border-t-[#949699]" /></span>
      </div>
      <div className="ml-auto flex gap-4 pt-px">
        <span>Blog</span>
        <span>Contact</span>
      </div>
      <div className="mb-px ml-[22px] flex h-[35px] w-32 items-center border border-[#d9d9d9] bg-white pt-px pr-[13px] pl-[11px]">
        <div className="flex items-baseline overflow-hidden whitespace-nowrap">
          <span className="w-[42px] shrink-0 font-['Lato',sans-serif] text-[14px] leading-6 tracking-[-0.2px] text-[#b0b0b0]">Google</span>
          <span className="ml-1 text-[14.400px] tracking-[-0.12px] text-[#999]">Custom Search</span>
        </div>
      </div>
      <div className="mr-[30px] ml-[14px] grid h-[27px] w-[69px] place-items-center border border-[#666] bg-[#cecece]">
        <svg className="size-[13px]" viewBox="0 0 13 13" fill="none" stroke="#fff" strokeWidth="2"><circle cx="4.800" cy="4.800" r="3.700" /><path d="M7.700 7.700L12 12" strokeWidth="2.300" /></svg>
      </div>
    </nav>
  );
}

function SideBar() {
  return (
    <aside className="flex w-[232px] shrink-0 flex-col border-2 border-t-0 border-[#dedede] bg-white pl-[13px] text-[17px] tracking-[0.4px] text-[#451b1b]">
      <h3 className="mt-3 text-[28px] leading-[34px] tracking-[0.25px]">Getting Started</h3>
      <div className="mt-1 flex flex-col leading-[28.700px]">
        <a>What is an API?</a>
        <a>Why use the Census API</a>
        <a>Getting Started</a>
        <a>Finding Data</a>
        <a>Downloading the Data</a>
      </div>
      <div className="mt-[3px] flex flex-col pl-[10px] text-[14.400px] leading-5 tracking-[0.07px]">
        <a className="flex items-center">HTTP Request<span className="ml-1 border-x-4 border-t-4 border-x-transparent border-t-[#451b1b]" /></a>
        <a>Python Census API Wraper</a>
      </div>
      <div className="mt-1 flex flex-col leading-[28.400px]">
        <a>What's Next?</a>
        <a>Ready for More?</a>
      </div>
    </aside>
  );
}

function Article() {
  return (
    <main className="flex-1 overflow-hidden bg-white px-[26px] pt-[21px] text-base leading-6 text-[#212529]">
      <h3 className="text-[28px] leading-[34px] tracking-[0.28px]">What is an API?</h3>
      <p className="mt-[7px] tracking-[-0.055px]">An <b>A</b>pplication <b>P</b>rogramming <b>I</b>nterface is a simple way to access/query data directly from the host’s servers.</p>
      <h3 className="mt-[17px] text-[28px] leading-[34px] tracking-[0.28px]">Why use the Census API?</h3>
      <p className="mt-[7px] tracking-[-0.055px]">The Census API is useful for integrating census data into your website or for requesting a lot of data at once.<br />Here are some examples of how others have used the Census API:</p>
      <ul className="mt-4 list-disc pl-10">
        <li><a className="tracking-[0.06px] text-[#007bff]">Circular Area Profiling System</a></li>
        <li><a className="text-[#007bff]">ClearGov: Local Government Transparency &amp; Analytics</a></li>
      </ul>
    </main>
  );
}

function FindBar() {
  return (
    <div className={`${UI} flex h-[38px] items-center border-t border-[#c2c0bd] bg-[#f1f0ee] pl-2 text-[14px] text-[#4c4c4c]`}>
      <div className="flex h-[23px] rounded-[2px] border border-[#c3bfba] bg-white">
        <span className="w-[203px] pl-[6px] text-[14px] leading-[21px] tracking-[-0.05px] text-[#999]">Find in page</span>
        <span className="grid w-[27px] place-items-center border-l border-[#c3bfba] bg-[#f4f3f1]">
          <svg className="h-2 w-3" viewBox="0 0 12 8" fill="none" stroke="#c0c0c0" strokeWidth="2"><path d="M1 7l5-5 5 5" /></svg>
        </span>
        <span className="grid w-[27px] place-items-center border-l border-[#c3bfba] bg-[#f4f3f1]">
          <svg className="h-2 w-3" viewBox="0 0 12 8" fill="none" stroke="#c0c0c0" strokeWidth="2"><path d="M1 1l5 5 5-5" /></svg>
        </span>
      </div>
      <span className="ml-[5px] h-[29px] w-[93px] rounded-[4px] bg-[#cbcbcb] pl-[6px] leading-[29px] whitespace-nowrap">Highlight <u className="underline-offset-2">A</u>ll</span>
      <span className="ml-[11px] w-[94px] tracking-[0.1px] whitespace-nowrap">Match <u className="underline-offset-2">C</u>ase</span>
      <span className="tracking-[0.2px] whitespace-nowrap"><u className="underline-offset-2">W</u>hole Words</span>
      <svg className="mr-[13px] ml-auto size-[10px]" viewBox="0 0 10 10" stroke="currentColor" strokeWidth="1.700"><path d="M.8.8l8.400 8.400M9.200.8L.8 9.200" /></svg>
    </div>
  );
}

export default function App() {
  return (
    <div className="flex h-[741px] w-[1299px] flex-col overflow-hidden font-['Liberation_Sans',Arial,sans-serif]">
      <TitleBar />
      <TabStrip />
      <ToolBar />
      <div className="flex h-[613px] bg-white">
        <div className="flex w-[1287px] flex-col">
          <NavBar />
          <div className="flex h-[557px]">
            <SideBar />
            <div className="flex flex-1 flex-col">
              <div className="relative h-[286px] shrink-0 bg-[#eee]">
                <TennesseeMap />
                <p className="absolute right-3 bottom-0 text-[11px] leading-[14px] tracking-[0.06px] whitespace-nowrap text-[#777]">Population density coropleth of Tennessee made with data from the Census API.</p>
              </div>
              <div className="h-3 shrink-0 bg-[#353941]" />
              <Article />
            </div>
          </div>
        </div>
        <div className="flex w-3 justify-end bg-[#f1f0ee]">
          <span className="h-[72px] w-[5px] bg-[#b9b9b9]" />
        </div>
      </div>
      <FindBar />
    </div>
  );
}
